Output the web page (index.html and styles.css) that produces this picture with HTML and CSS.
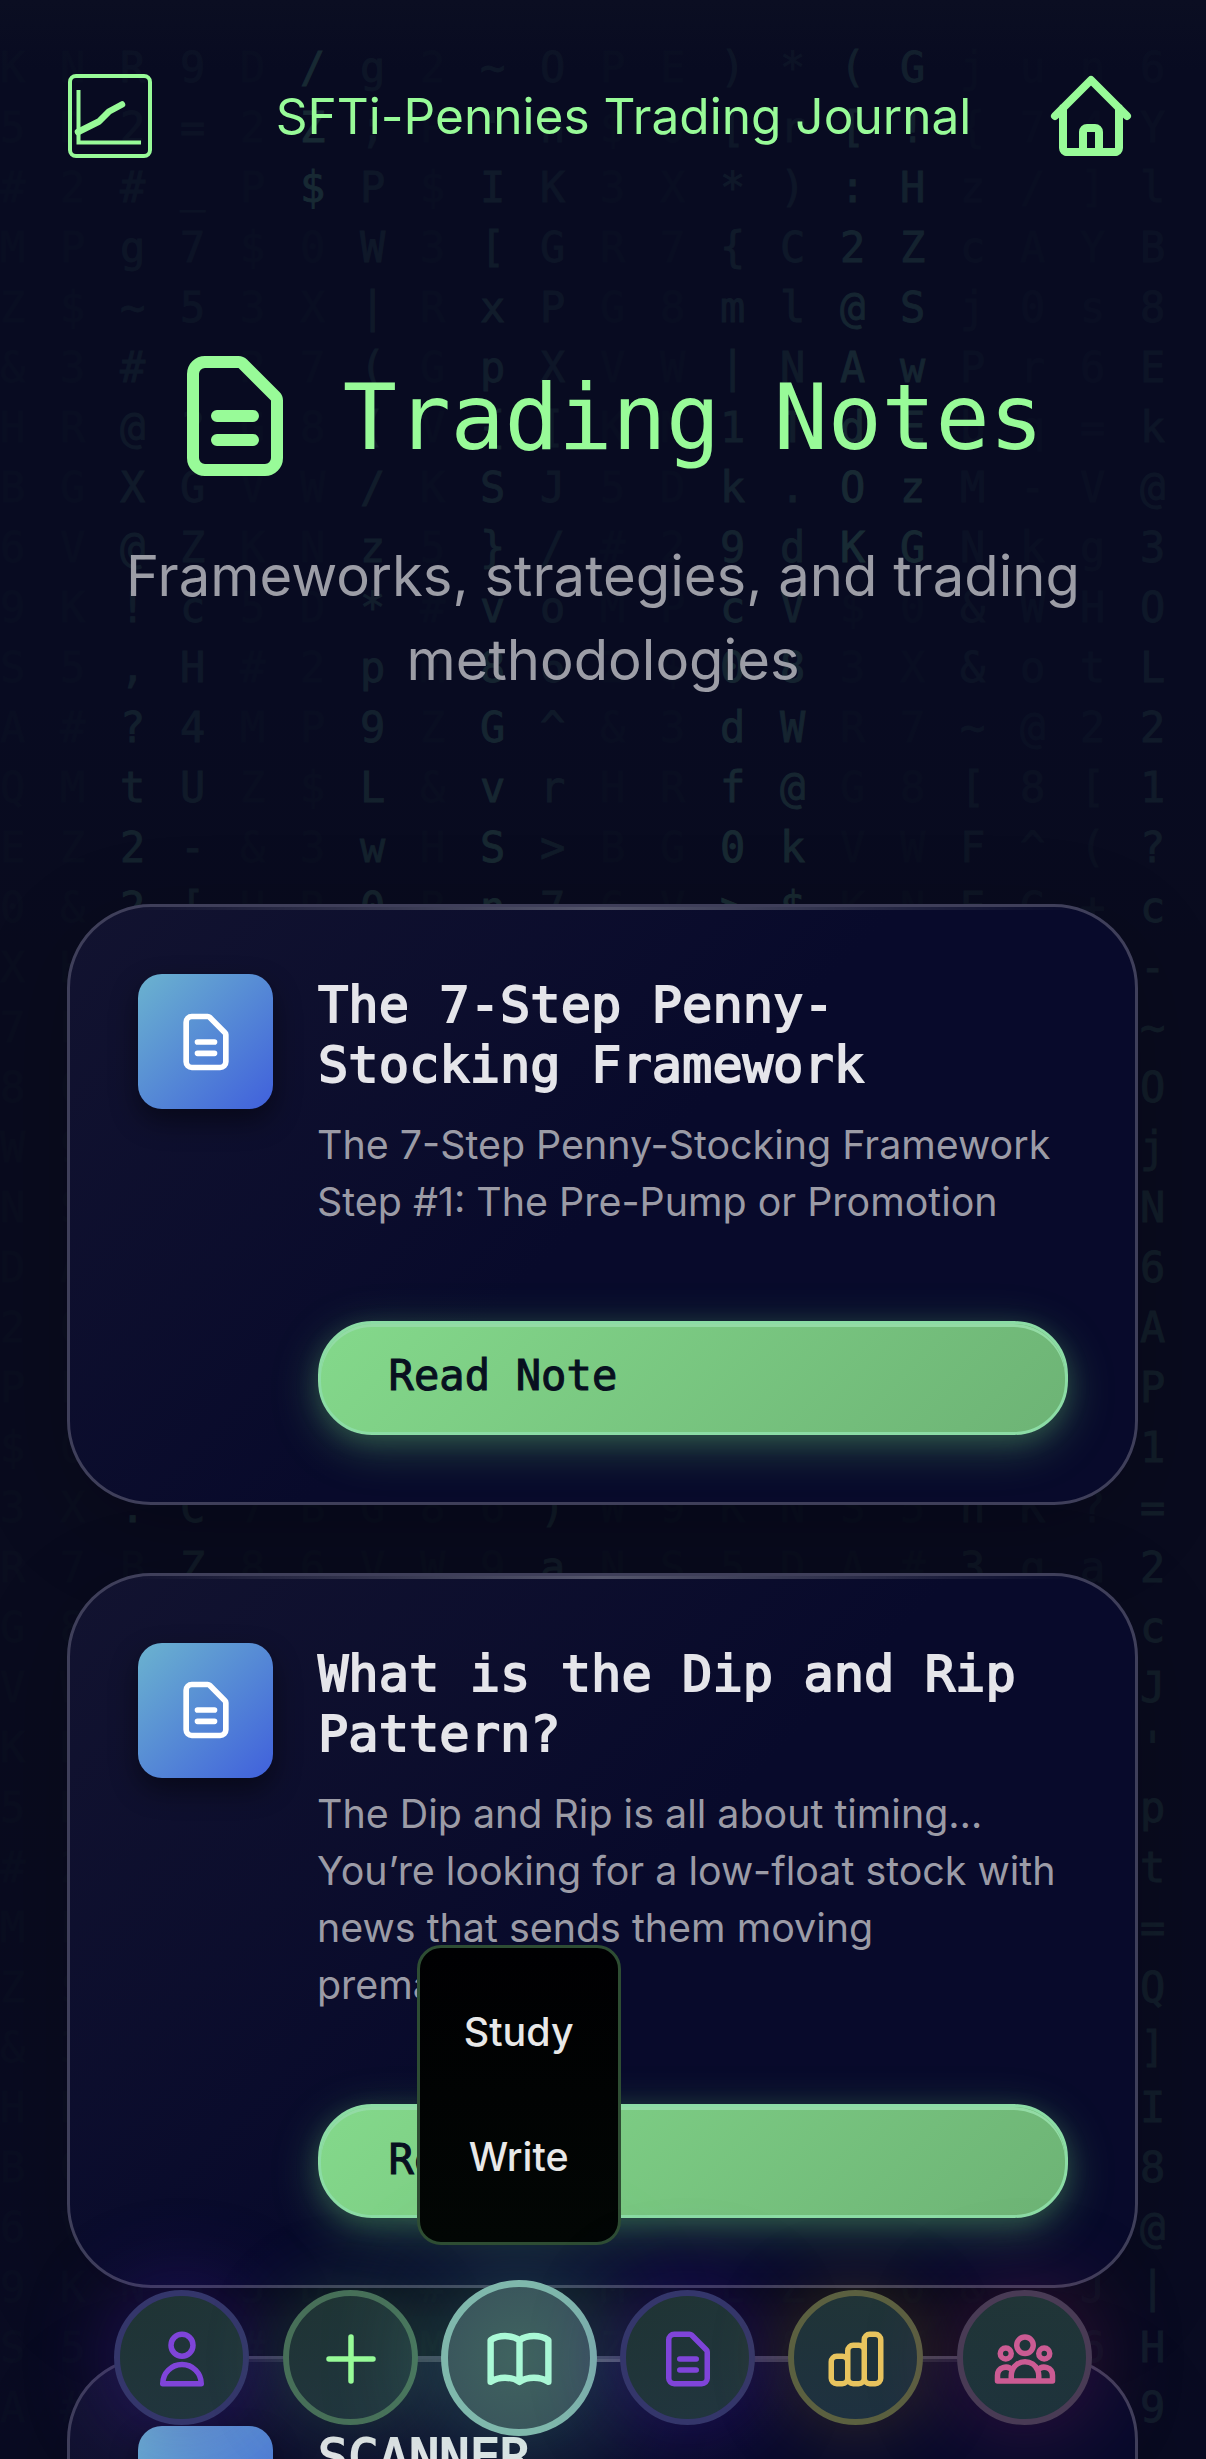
FILE: index.html
```html
<!DOCTYPE html>
<html lang="en">
<head>
<meta charset="utf-8">
<title>Trading Notes</title>
<link rel="stylesheet" href="styles.css">
</head>
<body>
<svg class="defs" aria-hidden="true">
  <symbol id="doc" viewBox="0 0 24 24"><path d="M9 12h6m-6 4h6m2 5H7a2 2 0 01-2-2V5a2 2 0 012-2h5.586a1 1 0 01.707.293l5.414 5.414a1 1 0 01.293.707V19a2 2 0 01-2 2z"/></symbol>
</svg>
<div class="screen">
  <div class="rain" id="rain" aria-hidden="true"></div>

  <header class="topbar">
    <svg class="logo" viewBox="0 0 84 84"><rect x="2" y="2" width="80" height="80" rx="6"/><path d="M10.500 16V68.500H73"/><path class="trend" d="M10 58L31 47.500L41 37.500L54 30.500"/></svg>
    <span class="brand">SFTi-Pennies Trading Journal</span>
    <svg class="icon home" viewBox="0 0 24 24"><path d="M3 12l2-2m0 0l7-7 7 7M5 10v10a1 1 0 001 1h3m10-11l2 2m-2-2v10a1 1 0 01-1 1h-3m-6 0a1 1 0 001-1v-4a1 1 0 011-1h2a1 1 0 011 1v4a1 1 0 001 1m-6 0h6"/><path d="M6 21h12"/></svg>
  </header>

  <section class="hero">
    <h1><svg class="icon hero-icon"><use href="#doc"/></svg><span>Trading Notes</span></h1>
    <p>Frameworks, strategies, and trading<br>methodologies</p>
  </section>

  <main class="cards">
    <article class="card">
      <div class="tile"><svg class="icon"><use href="#doc"/></svg></div>
      <div class="body">
        <h2>The 7-Step Penny-<br>Stocking Framework</h2>
        <p>The 7-Step Penny-Stocking Framework<br>Step #1: The Pre-Pump or Promotion</p>
        <a class="btn">Read Note</a>
      </div>
    </article>
    <article class="card">
      <div class="tile"><svg class="icon"><use href="#doc"/></svg></div>
      <div class="body">
        <h2>What is the Dip and Rip<br>Pattern?</h2>
        <p>The Dip and Rip is all about timing…<br>You’re looking for a low-float stock with<br>news that sends them moving<br>prematurely</p>
        <a class="btn">Read Note</a>
      </div>
    </article>
    <article class="card">
      <div class="tile"><svg class="icon"><use href="#doc"/></svg></div>
      <div class="body">
        <h2>SCANNER</h2>
      </div>
    </article>
  </main>

  <nav class="dock">
    <a class="item violet"><svg class="icon" viewBox="0 0 24 24"><path d="M16 7a4 4 0 11-8 0 4 4 0 018 0zM12 14a7 7 0 00-7 7h14a7 7 0 00-7-7z"/></svg></a>
    <a class="item green"><svg class="icon" viewBox="0 0 24 24"><path d="M12 4v16m8-8H4"/></svg></a>
    <div class="item active"><svg class="icon" viewBox="0 0 24 24"><path d="M12 6.253v13m0-13C10.832 5.477 9.246 5 7.500 5S4.168 5.477 3 6.253v13C4.168 18.477 5.754 18 7.500 18s3.332.477 4.500 1.253m0-13C13.168 5.477 14.754 5 16.500 5c1.747 0 3.332.477 4.500 1.253v13C19.832 18.477 18.247 18 16.500 18c-1.746 0-3.332.477-4.500 1.253"/></svg>
      <div class="menu"><a>Study</a><a>Write</a></div>
    </div>
    <a class="item violet"><svg class="icon" viewBox="0 0 24 24"><use href="#doc"/></svg></a>
    <a class="item gold"><svg class="icon" viewBox="0 0 24 24"><path d="M9 19v-6a2 2 0 00-2-2H5a2 2 0 00-2 2v6a2 2 0 002 2h2a2 2 0 002-2zm0 0V9a2 2 0 012-2h2a2 2 0 012 2v10m-6 0a2 2 0 002 2h2a2 2 0 002-2m0 0V5a2 2 0 012-2h2a2 2 0 012 2v14a2 2 0 01-2 2h-2a2 2 0 01-2-2z"/></svg></a>
    <a class="item pink"><svg class="icon" viewBox="0 0 24 24"><path d="M17 20h5v-2a3 3 0 00-5.356-1.857M17 20H7m10 0v-2c0-.656-.126-1.283-.356-1.857M7 20H2v-2a3 3 0 015.356-1.857M7 20v-2c0-.656.126-1.283.356-1.857m0 0a5.002 5.002 0 019.288 0M15 7a3 3 0 11-6 0 3 3 0 016 0zm6 3a2 2 0 11-4 0 2 2 0 014 0zM7 10a2 2 0 11-4 0 2 2 0 014 0z"/></svg></a>
  </nav>
</div>
<script src="rain.js"></script>
</body>
</html>
```
FILE: styles.css
```css
* { box-sizing: border-box; }
html, body { margin: 0; background: #080a1c; }
body { font-family: Inter, "Liberation Sans", sans-serif; color: #e5e5ea; }
h1, h2, p { margin: 0; font-weight: 400; }

.defs { position: absolute; width: 0; height: 0; }

.screen {
  position: relative;
  width: 1206px;
  height: 2459px;
  overflow: hidden;
  background: linear-gradient(180deg, #0b0e22 0, #080b21 70px, #080b21 700px, #090b1e 950px, #090b1e 1700px, #090b22 2459px);
}

.icon {
  display: block;
  fill: none;
  stroke: currentColor;
  stroke-width: 2;
  stroke-linecap: round;
  stroke-linejoin: round;
}

/* falling glyph backdrop */
.rain {
  position: absolute;
  inset: 0;
  display: flex;
  padding-top: 38px;
  font: 42px/60px "DejaVu Sans Mono", monospace;
  -webkit-text-stroke: .8px currentColor;
  color: #6fd09a;
}
.rain div { width: 60px; flex: none; }
.rain span { display: block; height: 60px; white-space: pre; }

.topbar {
  position: relative;
  display: flex;
  justify-content: space-between;
  align-items: center;
  height: 232px;
  padding: 0 67px 0 68px;
  color: #98fb98;
}
.logo { width: 84px; height: 84px; fill: none; stroke: currentColor; stroke-width: 4; }
.logo .trend { stroke-width: 6.5; stroke-linecap: round; stroke-linejoin: round; }
.brand { font-size: 49.6px; line-height: 60px; margin-left: 52px; white-space: nowrap; }
.home { width: 96px; height: 96px; }

.hero { position: relative; height: 672px; padding-top: 112px; text-align: center; }
.hero h1 {
  display: flex;
  justify-content: center;
  align-items: center;
  gap: 36px;
  height: 144px;
  font: 90px/108px "DejaVu Sans Mono", monospace;
  letter-spacing: -.3px;
  color: #98fb98;
  white-space: nowrap;
}
.hero-icon { width: 144px; height: 144px; flex: none; }
.hero h1 span { position: relative; top: 2px; }
.hero p { margin-top: 46px; font-size: 56.2px; line-height: 84px; color: #9c9da6; }

.cards { position: relative; display: flex; flex-direction: column; gap: 68px; padding: 0 68px 0 67px; }
.card {
  position: relative;
  display: flex;
  gap: 45px;
  flex: none;
  padding: 67px 67px 67px 68px;
  border: 3px solid #3f3f5a;
  border-radius: 84px;
  background: linear-gradient(135deg, #121330 0%, #080a2b 50%, #080a2b 100%);
  box-shadow: 0 24px 96px rgba(0, 0, 0, .2);
}
.card::before {
  content: "";
  position: absolute;
  top: 0;
  left: 60px;
  right: 60px;
  height: 3px;
  background: linear-gradient(90deg, transparent, rgba(255, 255, 255, .3), transparent);
}
.card:last-child { min-height: 500px; }
.tile {
  flex: none;
  display: flex;
  align-items: center;
  justify-content: center;
  width: 135px;
  height: 135px;
  border-radius: 24px;
  background: linear-gradient(135deg, #6bb3cf 0%, #4060dc 100%);
  box-shadow: 0 12px 28px rgba(0, 0, 0, .45);
  color: #fff;
}
.tile .icon { width: 68px; height: 68px; }
.body { flex: 1; min-width: 0; }
.body h2 {
  padding-top: 1px;
  font: 50.4px/60px "DejaVu Sans Mono", monospace;
  -webkit-text-stroke: 1.8px currentColor;
  white-space: nowrap;
}
.body p { margin: 22px 0 0 -1px; font-size: 39.4px; line-height: 57.1px; color: #9b9ba6; white-space: nowrap; }
.btn {
  display: flex;
  align-items: center;
  height: 114px;
  margin-top: 89.8px;
  padding: 0 0 3px 67.5px;
  border: 3px solid #8cdca5;
  border-radius: 54px;
  background: linear-gradient(135deg, #84d98b 0%, #6db375 100%);
  background-origin: border-box;
  box-shadow: inset 0 3px 0 #93dba5, 0 12px 48px rgba(112, 220, 125, .3), 0 6px 24px rgba(112, 220, 125, .16);
  font: 42px/54px "DejaVu Sans Mono", monospace;
  letter-spacing: .15px;
  color: #08101f;
  -webkit-text-stroke: 1.1px currentColor;
}

.dock {
  position: absolute;
  left: 114px;
  bottom: 34px;
  display: flex;
  gap: 33.6px;
}
.item {
  position: relative;
  display: flex;
  align-items: center;
  justify-content: center;
  width: 135px;
  height: 135px;
  border: 6px solid;
  border-radius: 50%;
  background: linear-gradient(160deg, #1f3434, #21353f);
}
.item > .icon { width: 66px; height: 66px; margin: 2px 0 0 1px; }
.violet { border-color: #34366b; box-shadow: 0 0 90px rgba(76, 28, 170, .45); }
.violet .icon { color: #7f44d9; }
.green { border-color: #476f58; box-shadow: 0 0 80px rgba(80, 160, 110, .32); }
.green .icon { color: #98fb98; }
.gold { border-color: #5b6040; background: linear-gradient(#203437, #1e3140); box-shadow: 0 0 80px rgba(170, 130, 40, .3); }
.gold .icon { color: #e8c45e; }
.pink { border-color: #493b55; background: linear-gradient(#203537, #1e333c); box-shadow: 0 0 90px rgba(150, 40, 110, .34); }
.pink .icon { color: #cb5b93; }
.active {
  width: 156px;
  height: 156px;
  margin: -10.5px;
  border: 7px solid #7fb8ac;
  background: radial-gradient(#406460 0%, #3a565c 75%);
  box-shadow: 0 0 120px rgba(100, 210, 170, .42);
}
.active > .icon { width: 77px; height: 77px; color: #aaf9d6; }
.menu {
  position: absolute;
  left: 50%;
  bottom: 184px;
  transform: translateX(-50%);
  display: flex;
  flex-direction: column;
  justify-content: center;
  width: 204px;
  height: 300px;
  border: 3px solid #2e4d33;
  border-radius: 24px;
  background: linear-gradient(#000002, #020604);
  font-size: 39.4px;
  font-weight: 500;
  line-height: 125px;
  text-align: center;
  color: #e8e8e8;
}
```
FILE: rain.js
```
// Glyph columns of the backdrop: [text from the top row, head brightness, tail brightness]
const columns = {
  2: ["R2#g~#@X@!,?t22xq7Lm;=kR.", .03, .12],
  3: ["9=_75,?GZcH4U-[kd8Pv3nWsCZ", .03, .08],
  5: ["/Z$", .15, .15],
  6: ["g;PW|((/z*p9Lw0", .05, .12],
  8: ["~'I[xp{S}v8GvSn", .06, .15],
  9: ["OhKGPX[J/o6^r>7ks9Qd1Bm=)a", .04, .08],
  12: [")[*{m|1k9c0df0>", .05, .16],
  13: ["*r)ClNT.dV8W@k$", .04, .15],
  14: ["([:2@AdOK", .1, .17],
  15: ["G!HZSwEzG", .1, .15],
  16: ["j{zcjPbMN&&~[FEwq4Xo9tL;h3", .01, .05],
  17: ["u7/A0rq-kWo@8^Gd5f|pTe1sKq", .008, .03],
  18: ["n4]Ys6=VgHt2[(+b0RjCx8m;?aWq/L3zE9fKPJ6n", .008, .03],
  19: ["6YlB8Ek@3OL21?c-~OjN6AP1=2cJ'pt=Q]I8@|H9", .015, .09]
};
const filler = "K8H$Q5WB3E#N6R0MD9GXZ2SV7&PA";
const rain = document.getElementById("rain");
for (let c = 0; c < 20; c++) {
  const [text, from, to] = columns[c] || ["", 0, 0];
  const col = document.createElement("div");
  for (let r = 0; r < 40; r++) {
    const cell = document.createElement("span");
    const lit = r < text.length;
    cell.textContent = lit ? text[r] : filler[(c * 11 + r * 5) % filler.length];
    cell.style.opacity = lit ? from + (to - from) * Math.min(1, r / Math.min(14, text.length)) : .012;
    col.append(cell);
  }
  rain.append(col);
}
```
